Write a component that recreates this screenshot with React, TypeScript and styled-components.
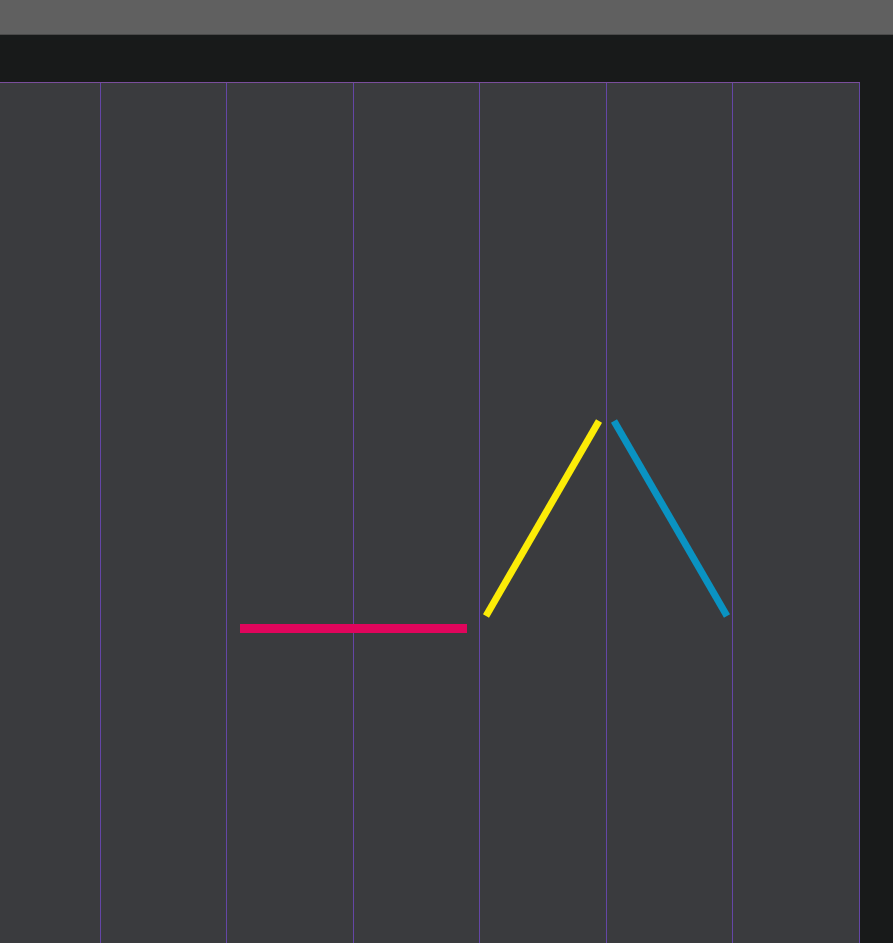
import styled, { createGlobalStyle } from "styled-components";

const GlobalStyle = createGlobalStyle`
  html, body {
    margin: 0;
    padding: 0;
    background: #181a1a;
    overflow: hidden;
    font-family: "Liberation Sans", Arial, sans-serif;
  }
`;

// column widths in whole pixels so every guide lands on a pixel
const columnWidths = [126, 126, 127, 126, 127, 126, 127];

// strokes drawn on the artboard, in page coordinates
const strokes = [
  { x1: 240, y1: 628.5, x2: 467, y2: 628.5, color: "#e0055c", width: 9 },
  { x1: 486, y1: 616, x2: 599, y2: 421, color: "#fcec07", width: 7 },
  { x1: 614, y1: 421, x2: 727, y2: 616, color: "#0a93c2", width: 7 },
];

function App() {
  return (
    <>
      <GlobalStyle />
      <Page>
        <TopBar />
        <Workspace>
          <Artboard>
            <Columns>
              {columnWidths.map((w, i) => (
                <Column key={i} $width={w} />
              ))}
            </Columns>
            <Drawing viewBox="0 82 860 861" width="860" height="861">
              {strokes.map((s, i) => (
                <line
                  key={i}
                  x1={s.x1}
                  y1={s.y1}
                  x2={s.x2}
                  y2={s.y2}
                  stroke={s.color}
                  strokeWidth={s.width}
                />
              ))}
            </Drawing>
          </Artboard>
        </Workspace>
      </Page>
    </>
  );
}

export default App;

const Page = styled.div`
  display: flex;
  flex-direction: column;
  width: 893px;
  height: 943px;
`;

const TopBar = styled.div`
  height: 34px;
  background: #606060;
  border-bottom: 1px solid #4a4a4a;
  flex-shrink: 0;
`;

const Workspace = styled.div`
  flex: 1;
  display: flex;
  padding-top: 47px;
  background: #181a1a;
  overflow: hidden;
`;

const Artboard = styled.div`
  position: relative;
  width: 860px;
  height: 100%;
  background: #3a3b3e;
  border-top: 1px solid #7a4e9c;
  box-sizing: border-box;
  overflow: hidden;
`;

const Columns = styled.div`
  display: flex;
  margin-left: -25px;
  height: 100%;
`;

const Column = styled.div<{ $width: number }>`
  flex: 0 0 ${(p) => p.$width}px;
  box-sizing: border-box;
  border-right: 1px solid #6446a6;
`;

const Drawing = styled.svg`
  position: absolute;
  left: 0;
  top: -1px;
  pointer-events: none;
`;
